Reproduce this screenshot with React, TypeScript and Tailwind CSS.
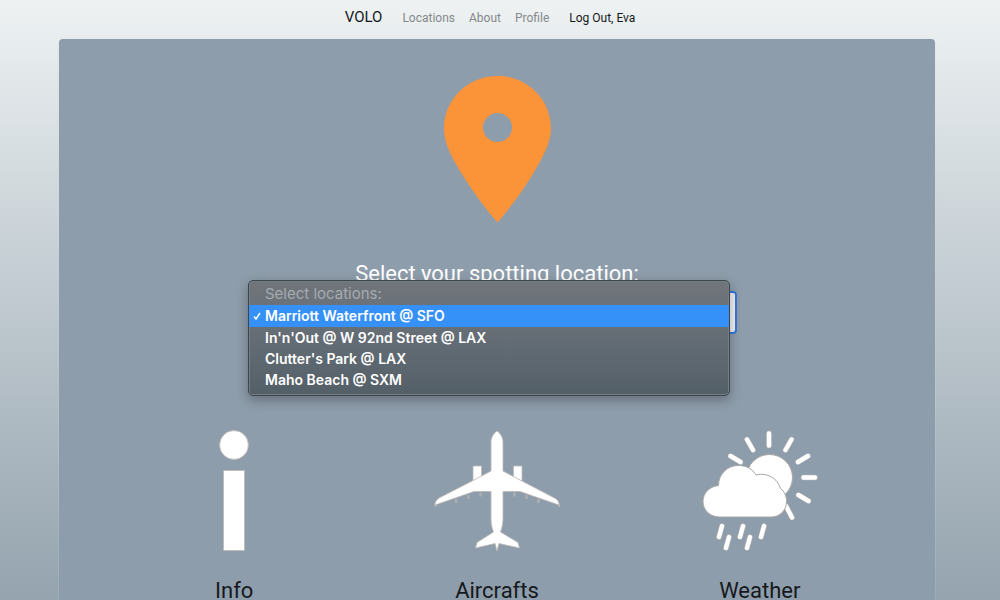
const navLinks = ["Locations", "About", "Profile"];

const locations = [
  "Marriott Waterfront @ SFO",
  "In'n'Out @ W 92nd Street @ LAX",
  "Clutter's Park @ LAX",
  "Maho Beach @ SXM",
];

function PinIcon() {
  return (
    <svg viewBox="0 0 108 147" className="h-[147px] w-[108px]" aria-hidden="true">
      <path
        fill="#fb9338"
        fillRule="evenodd"
        d="M54.500 0C24.500 0 1 23.500 1 52.500C1 65 6.500 77 14 90C24.500 108 38.500 128 54.500 146.500C70.500 128 84.500 108 94.500 90C102 77 108 65 108 52.500C108 23.500 84.500 0 54.500 0ZM54.500 37A14.500 14.500 0 1 1 54.500 66A14.500 14.500 0 1 1 54.500 37Z"
      />
    </svg>
  );
}

function InfoIcon() {
  return (
    <svg viewBox="0 0 30 122" className="h-[122px] w-[30px]" aria-hidden="true">
      <g fill="#fff" stroke="#bcb8b5" strokeWidth="0.8">
        <circle cx="15" cy="15" r="14.400" />
        <rect x="4.500" y="40.500" width="21" height="80" />
      </g>
    </svg>
  );
}

function PlaneIcon() {
  return (
    <svg viewBox="0 0 126 122" className="h-[122px] w-[126px]" aria-hidden="true">
      <path
        d="M22 69v4M34.500 65v4M46.500 62.500v4M80.500 62.500v4M92.500 65v4M104.500 69v4M1.500 73v4M125 73v4"
        stroke="#b3b2b1"
        strokeWidth="2"
      />
      <g fill="#fff" stroke="#bcb8b5" strokeWidth="0.8" strokeLinejoin="round">
        <path d="M39 36h8.500v12l-8.500 3zM79.500 36h8.500v15l-8.500-3z" />
        <path d="M63 1C59.500 3 57 8 57 12V41L40 50L7 67C3 69 1 71.500 1 75L40 61.500H57V89C57 94 58 98 59.500 102L43 112.500L41.500 118L61 113.500L63 121L65 113.500L85.500 118L84 112.500L66.500 102C68 98 69 94 69 89V61.500H86L125 75C125 71 123 69 119.500 67.500L86 50L69 41V12C69 8 66.500 3 63 1Z" />
      </g>
    </svg>
  );
}

function WeatherIcon() {
  const strokes =
    "M67 3.500v12M45 9.500l6 10.500M89.500 9.500l-6 10.500M28.500 26l10 6M106 26l-10 6M101.500 47.500h11.500M96.500 65l10 6M84 76l6 11.500M20 96l-3 11M27 107l-3 11M41 96l-3 11M48 107l-3 11M62 96l-3 11";
  return (
    <svg viewBox="0 0 116 122" className="h-[122px] w-[116px]" aria-hidden="true">
      <g fill="none" strokeLinecap="round">
        <path d={strokes} stroke="#bcb8b5" strokeWidth="5.400" />
        <path d={strokes} stroke="#fff" strokeWidth="4.400" />
      </g>
      <g fill="#fff" stroke="#aaa7a5" strokeWidth="1">
        <circle cx="67.500" cy="47.500" r="23" />
        <path d="M17.500 87C8 87 1 80 1 71.500C1 63 7.500 56.500 16.500 55.500C16.500 44 25.500 35.500 36.500 35.500C44.500 35.500 50.500 39 54 45C65.500 42 75.500 48.500 78.500 58.500C82.500 61.500 84.500 66 84.500 71.500C84.500 80 78 87 69.500 87Z" />
      </g>
    </svg>
  );
}

const features = [
  { name: "Info", Icon: InfoIcon },
  { name: "Aircrafts", Icon: PlaneIcon },
  { name: "Weather", Icon: WeatherIcon },
];

export default function App() {
  return (
    <div className="h-screen overflow-hidden bg-linear-to-b from-[#eef2f3] to-[#94a3ae] font-[Roboto,sans-serif] text-[#15191c]">
      <nav className="flex h-[39px] items-center justify-center pr-5 pb-1 text-xs">
        <a href="#home" className="mr-5 text-[15px]">VOLO</a>
        <div className="flex gap-[14px] text-[#85898b]">
          {navLinks.map((link) => (
            <a key={link} href={`#${link.toLowerCase()}`}>{link}</a>
          ))}
        </div>
        <a href="#logout" className="ml-5">Log Out, Eva</a>
      </nav>

      <main className="mr-[65px] ml-[59px] flex min-h-full flex-col items-center rounded-t bg-[#8e9dab] pt-[37px] shadow-[0_0_1px_1px_#dce3e733]">
        <PinIcon />
        <label htmlFor="location" className="mt-[37px] text-[22px] leading-7 text-white">
          Select your spotting location:
        </label>

        <div className="relative mt-[3px] w-[480px]">
          <select
            id="location"
            defaultValue={locations[0]}
            className="block h-[43px] w-full appearance-none rounded border-2 border-[#3577d6] bg-[#f1f1f3] px-3 text-base text-[#33383c]"
          >
            {locations.map((location) => (
              <option key={location}>{location}</option>
            ))}
          </select>
          <ul
            role="listbox"
            aria-label="Select locations"
            className="absolute -top-[11px] -left-[9px] w-[482px] rounded-[5px] border border-[#3f464b] bg-linear-to-b from-[#71757c] via-[#646d75] to-[#535f67] pt-0.5 pb-[5px] font-[Inter,sans-serif] text-sm leading-[21px] font-semibold text-white shadow-[0_4px_12px_#0000004d,inset_0_0_0_1px_#737d84]"
          >
            <li className="px-4 pb-px text-[15px] font-normal text-[#a5abb0]">Select locations:</li>
            {locations.map((location, index) => (
              <li
                key={location}
                role="option"
                aria-selected={index === 0}
                className="flex items-center px-1 aria-selected:bg-[#3590f8] aria-selected:pb-px"
              >
                <span className="w-3">
                  {index === 0 && (
                    <svg viewBox="0 0 8 8" className="size-2" aria-hidden="true">
                      <path d="M1 4.500L3 7L7 1" fill="none" stroke="#fff" strokeWidth="1.500" />
                    </svg>
                  )}
                </span>
                {location}
              </li>
            ))}
          </ul>
        </div>

        <section className="mt-24 grid w-[90%] grid-cols-3">
          {features.map(({ name, Icon }) => (
            <a
              key={name}
              href={`#${name.toLowerCase()}`}
              className="flex flex-col items-center gap-[29px] text-[22px] leading-[20px]"
            >
              <Icon />
              {name}
            </a>
          ))}
        </section>
      </main>
    </div>
  );
}
